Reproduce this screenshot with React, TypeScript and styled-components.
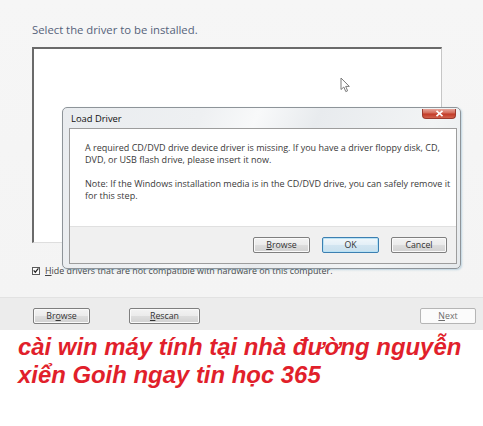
import React, { FC } from "react"
import styled, { createGlobalStyle } from "styled-components"

const GlobalStyle = createGlobalStyle`
	html, body {
		margin: 0;
		padding: 0;
		background: #ffffff;
	}
	#root {
		width: 483px;
		height: 426px;
		overflow: hidden;
	}
`

type ButtonProps = {
	$default?: boolean
	$disabled?: boolean
	$width: number
}

const App: FC = () => {
	return (
		<Page>
			<GlobalStyle />
			<Wizard>
				<Title>Select the driver to be installed.</Title>
				<ListBox>
					<Pointer width="12" height="16" viewBox="0 0 12 16">
						<path
							d="M1 1 L1 12.5 L3.8 10 L5.8 14.6 L7.6 13.8 L5.7 9.4 L9.3 9.4 Z"
							fill="#ffffff"
							stroke="#7a7a7a"
							strokeWidth="1"
							strokeLinejoin="round"
						/>
					</Pointer>
				</ListBox>
				<CheckRow>
					<CheckBox>
						<svg width="7" height="7" viewBox="0 0 7 7">
							<path d="M0.8 3.4 L2.7 5.5 L6.3 1" fill="none" stroke="#222" strokeWidth="1.4" />
						</svg>
					</CheckBox>
					<CheckLabel>
						<u>H</u>ide drivers that are not compatible with hardware on this computer.
					</CheckLabel>
				</CheckRow>

				<Dialog>
					<DialogTitle>
						<span>Load Driver</span>
						<CloseButton>
							<svg width="9" height="7" viewBox="0 0 9 7">
								<path d="M1.5 0.8 L7.5 6.2 M7.5 0.8 L1.5 6.2" stroke="#fff" strokeWidth="1.6" />
							</svg>
						</CloseButton>
					</DialogTitle>
					<DialogPanel>
						<Message>
							<p>
								A required CD/DVD drive device driver is missing. If you have a driver floppy disk, CD,
								<br />
								DVD, or USB flash drive, please insert it now.
							</p>
							<p>
								Note: If the Windows installation media is in the CD/DVD drive, you can safely remove it
								<br />
								for this step.
							</p>
						</Message>
						<DialogActions>
							<Button $width={57}>
								<u>B</u>rowse
							</Button>
							<Button $width={57} $default>
								OK
							</Button>
							<Button $width={56}>Cancel</Button>
						</DialogActions>
					</DialogPanel>
				</Dialog>
			</Wizard>

			<Footer>
				<FooterButtons>
					<Button $width={57}>
						Br<u>o</u>wse
					</Button>
					<Button $width={71}>
						<u>R</u>escan
					</Button>
				</FooterButtons>
				<Button $width={56} $disabled>
					<u>N</u>ext
				</Button>
			</Footer>

			<Caption>
				cài win máy tính tại nhà đường nguyễn
				<br />
				xiển Goih ngay tin học 365
			</Caption>
		</Page>
	)
}

export default App

const Page = styled.div`
	width: 483px;
	height: 426px;
	display: flex;
	flex-direction: column;
	font-family: "Open Sans", "Noto Sans", sans-serif;
`

const Wizard = styled.div`
	position: relative;
	height: 297px;
	box-sizing: border-box;
	padding: 21px 0 0 32px;

	background: linear-gradient(180deg, #f6f6f6 0%, #f4f4f4 100%);
`

const Title = styled.div`
	height: 17px;

	color: #55627a;
	font-size: 11.3px;
	line-height: 17px;
`

const ListBox = styled.div`
	position: relative;
	width: 410px;
	height: 196px;
	box-sizing: border-box;
	margin-top: 9px;

	background: #ffffff;
	border-top: 2px solid #6a6a6a;
	border-left: 2px solid #6a6a6a;
	border-right: 1px solid #c6c6c6;
	border-bottom: 1px solid #dedede;
`

const Pointer = styled.svg`
	position: absolute;
	left: 306px;
	top: 28px;
`

const CheckRow = styled.div`
	margin-top: 22px;

	display: flex;
	align-items: center;
	gap: 5px;
`

const CheckBox = styled.div`
	width: 8px;
	height: 8px;
	box-sizing: border-box;

	display: flex;
	align-items: center;
	justify-content: center;

	background: #fdfdfd;
	border: 1px solid #5a5a5a;
`

const CheckLabel = styled.span`
	color: #444;
	font-size: 8.9px;
	line-height: 11px;

	u {
		text-decoration-thickness: 1px;
	}
`

const Dialog = styled.div`
	position: absolute;
	left: 62px;
	top: 107px;
	width: 399px;
	height: 162px;
	box-sizing: border-box;

	display: flex;
	flex-direction: column;
	padding: 0 3px 4px 6px;

	background: linear-gradient(
		115deg,
		#e9ecef 0%,
		#eef0f2 30%,
		#f8f9fa 42%,
		#e8ebee 55%,
		#f2f4f5 80%,
		#e5e9ec 100%
	);
	border: 1px solid #8e9499;
	border-radius: 5px;
	box-shadow: 1px 1px 2px rgba(120, 170, 200, 0.45);
`

const DialogTitle = styled.div`
	height: 20px;

	display: flex;
	align-items: center;
	justify-content: space-between;

	color: #111;
	font-size: 9.4px;

	span {
		margin-left: 2px;
		margin-top: 1px;
	}
`

const CloseButton = styled.div`
	width: 32px;
	height: 9px;
	margin-top: -9px;
	margin-right: 1px;

	display: flex;
	align-items: center;
	justify-content: center;

	background: linear-gradient(180deg, #e6a499 0%, #d46a58 45%, #c23a27 55%, #d2624d 100%);
	border: 1px solid #9a3a2e;
	border-top: none;
	border-radius: 0 0 4px 4px;
`

const DialogPanel = styled.div`
	flex: 1;

	display: flex;
	flex-direction: column;

	background: #ffffff;
	border: 1px solid #9d9d9d;
`

const Message = styled.div`
	flex: 1;
	padding: 13px 0 0 15px;

	color: #3a3a3a;
	font-size: 9px;
	line-height: 12px;
	white-space: nowrap;

	p {
		margin: 0 0 12px 0;
	}
`

const DialogActions = styled.div`
	height: 37px;
	box-sizing: border-box;
	padding: 0 9px 0 0;

	display: flex;
	align-items: center;
	justify-content: flex-end;
	gap: 12px;

	background: #f0f0f0;
	border-top: 1px solid #e0e0e0;
`

const Button = styled.div<ButtonProps>`
	width: ${(p) => p.$width}px;
	height: 16px;
	box-sizing: border-box;

	display: flex;
	align-items: center;
	justify-content: center;

	color: ${(p) => (p.$disabled ? "#6d6d6d" : "#333")};
	font-size: 8.8px;

	background: ${(p) =>
		p.$disabled
			? "#fbfbfb"
			: p.$default
				? "linear-gradient(180deg, #f1f7fb 0%, #e3eff7 50%, #d2e5f1 52%, #c9e0ee 100%)"
				: "linear-gradient(180deg, #f3f3f3 0%, #ebebeb 50%, #dddddd 52%, #d1d1d1 100%)"};
	border: 1px solid ${(p) => (p.$disabled ? "#b5b5b5" : p.$default ? "#3c7fb1" : "#7f7f7f")};
	border-radius: 2px;
	box-shadow: ${(p) => (p.$default ? "inset 0 0 0 1px #b8e2f5" : "inset 0 0 0 1px #fafafa")};
`

const Footer = styled.div`
	height: 33px;
	box-sizing: border-box;
	padding: 10px 7px 0 33px;

	display: flex;
	align-items: flex-start;
	justify-content: space-between;

	background: #ececec;
	border-top: 1px solid #e2e2e2;
`

const FooterButtons = styled.div`
	display: flex;
	gap: 39px;
`

const Caption = styled.div`
	padding: 3px 0 0 18px;

	color: #e11f2b;
	font-family: "Liberation Sans", Arial, sans-serif;
	font-size: 23.9px;
	font-weight: bold;
	font-style: italic;
	line-height: 28px;
	white-space: nowrap;
`
